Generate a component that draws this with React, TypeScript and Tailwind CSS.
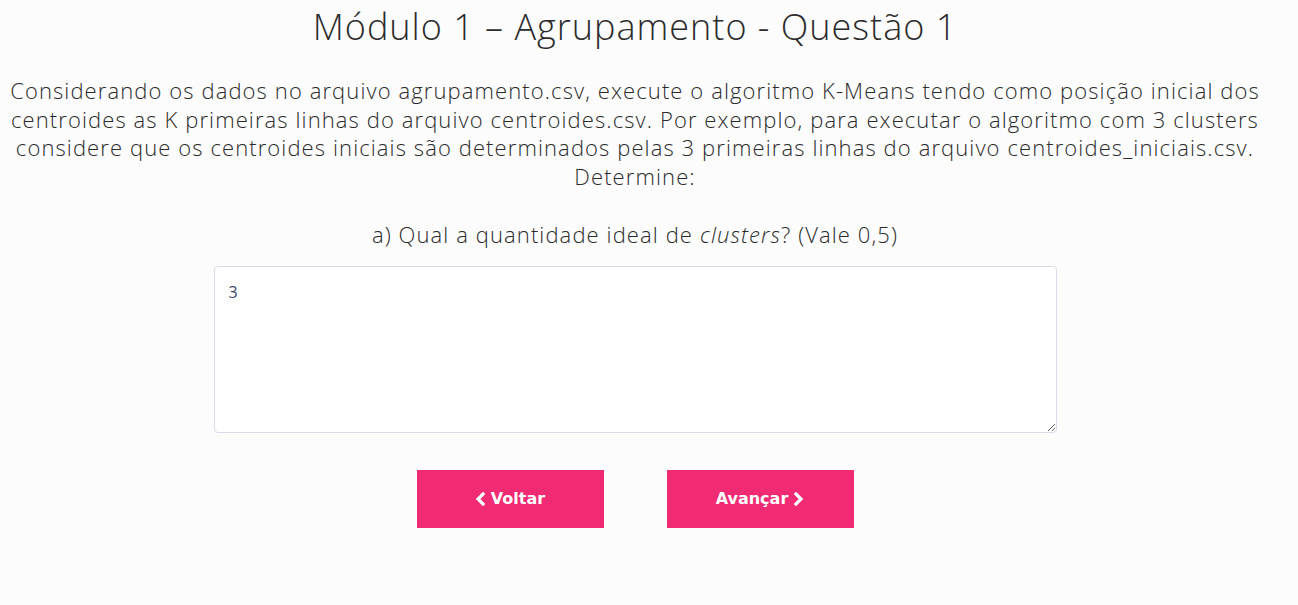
import React from "react";

function Chevron({ dir }: { dir: "left" | "right" }) {
  return (
    <svg width="11" height="14" viewBox="0 0 11 14" className="inline-block">
      {dir === "left" ? (
        <polyline points="8,2 3,7 8,12" fill="none" stroke="white" strokeWidth="3.2" strokeLinecap="square" />
      ) : (
        <polyline points="3,2 8,7 3,12" fill="none" stroke="white" strokeWidth="3.2" strokeLinecap="square" />
      )}
    </svg>
  );
}

export default function App() {
  return (
    <div className="min-h-screen bg-[#fcfcfc] text-[#2b2b2b]" style={{ fontFamily: "'Open Sans', Lato, sans-serif" }}>
      <div className="w-[1270px] text-center">
        {/* Title */}
        <h1 className="pt-[4px] text-[36px] font-light leading-[46px] tracking-[1px]">
          Módulo 1 – Agrupamento - Questão 1
        </h1>

        {/* Enunciado */}
        <p className="mt-[26px] text-[22px] font-light leading-[28.5px] tracking-[1.1px]">
          Considerando os dados no arquivo agrupamento.csv, execute o algoritmo K-Means tendo como posição inicial dos
          <br />
          centroides as K primeiras linhas do arquivo centroides.csv. Por exemplo, para executar o algoritmo com 3 clusters
          <br />
          considere que os centroides iniciais são determinados pelas 3 primeiras linhas do arquivo centroides_iniciais.csv.
          <br />
          Determine:
        </p>

        <p className="mt-[30px] text-[22px] font-light leading-[28.5px] tracking-[1.1px]">
          a) Qual a quantidade ideal de <em>clusters</em>? (Vale 0,5)
        </p>

        <div className="mt-[17px] flex justify-center">
          <textarea
            defaultValue="3"
            className="h-[167px] w-[843px] resize-y rounded-[4px] border border-[#d9dce6] bg-white px-[14px] py-[14px] text-[16px] leading-[22px] text-[#3b4a6b] outline-none"
            style={{ fontFamily: "'Open Sans', sans-serif" }}
          />
        </div>

        <div className="mt-[37px] flex justify-center gap-[63px]">
          <button
            className="flex h-[58px] w-[187px] items-center justify-center gap-[5px] bg-[#f02a73] text-[16px] font-bold text-white"
            style={{ fontFamily: "'DejaVu Sans', Verdana, sans-serif" }}
          >
            <Chevron dir="left" />
            Voltar
          </button>
          <button
            className="flex h-[58px] w-[187px] items-center justify-center gap-[5px] bg-[#f02a73] text-[16px] font-bold text-white"
            style={{ fontFamily: "'DejaVu Sans', Verdana, sans-serif" }}
          >
            Avançar
            <Chevron dir="right" />
          </button>
        </div>
      </div>
    </div>
  );
}
